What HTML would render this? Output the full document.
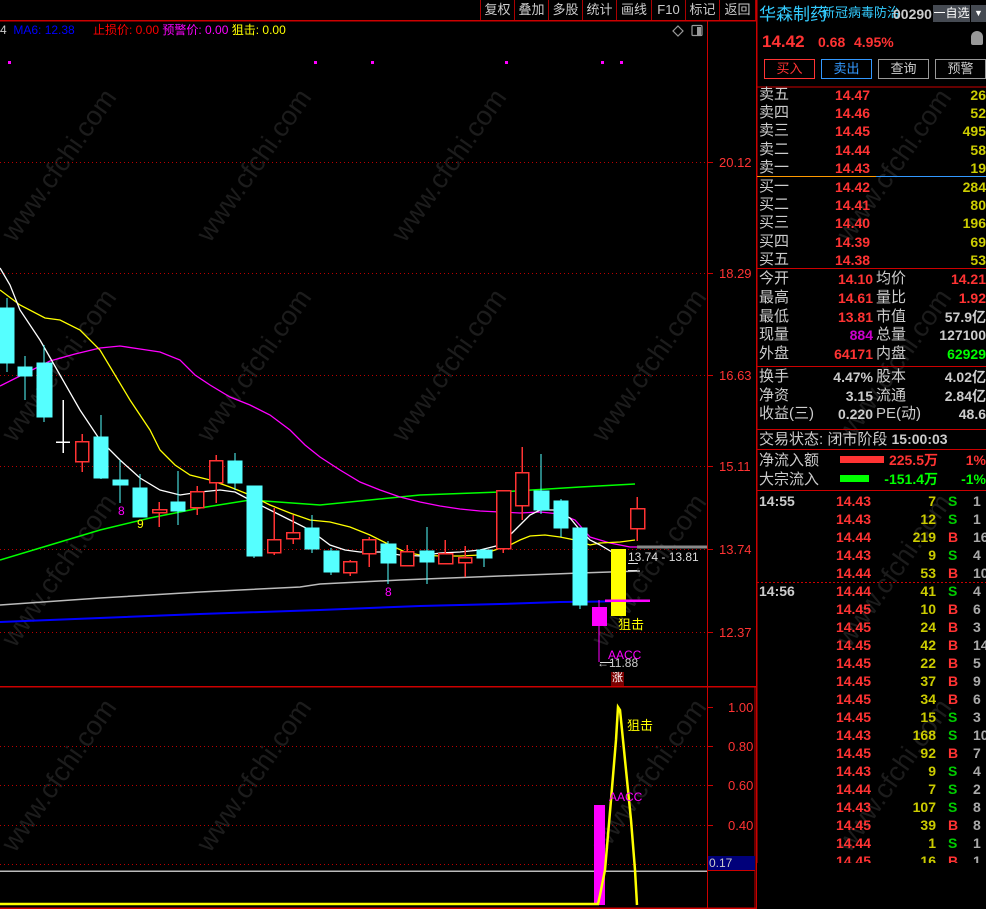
<!DOCTYPE html>
<html><head><meta charset="utf-8">
<style>
*{margin:0;padding:0;box-sizing:border-box}
body{width:986px;height:909px;background:#000;overflow:hidden;position:relative;font-family:"Liberation Sans","Noto Sans CJK SC",sans-serif;}
.a{position:absolute;white-space:nowrap;line-height:1}
.btn{position:absolute;top:0;height:20px;border-right:1px solid #a00;color:#ccc;font-size:13px;text-align:center;line-height:20px}
.r{position:absolute;font-size:14px;line-height:18px;white-space:nowrap}
.wm{position:absolute;color:#1c1c1c;font-size:27px;transform:rotate(-55deg);white-space:nowrap;font-family:"Liberation Sans",sans-serif}
</style></head><body>
<div class="wm" style="left:-30px;top:150px">www.cfchi.com</div>
<div class="wm" style="left:165px;top:150px">www.cfchi.com</div>
<div class="wm" style="left:360px;top:150px">www.cfchi.com</div>
<div class="wm" style="left:-30px;top:350px">www.cfchi.com</div>
<div class="wm" style="left:165px;top:350px">www.cfchi.com</div>
<div class="wm" style="left:360px;top:350px">www.cfchi.com</div>
<div class="wm" style="left:560px;top:350px">www.cfchi.com</div>
<div class="wm" style="left:-30px;top:555px">www.cfchi.com</div>
<div class="wm" style="left:560px;top:555px">www.cfchi.com</div>
<div class="wm" style="left:-30px;top:760px">www.cfchi.com</div>
<div class="wm" style="left:165px;top:760px">www.cfchi.com</div>
<div class="wm" style="left:560px;top:760px">www.cfchi.com</div>
<div class="wm" style="left:805px;top:150px">www.cfchi.com</div>
<div class="wm" style="left:805px;top:350px">www.cfchi.com</div>
<div class="wm" style="left:805px;top:555px">www.cfchi.com</div>
<div class="wm" style="left:805px;top:760px">www.cfchi.com</div>

<svg width="986" height="909" style="position:absolute;left:0;top:0" shape-rendering="crispEdges">
<line x1="0" y1="20.5" x2="757" y2="20.5" stroke="#c00" stroke-width="1.5"/>
<line x1="707.5" y1="20" x2="707.5" y2="909" stroke="#c00"/>
<line x1="756.5" y1="0" x2="756.5" y2="909" stroke="#c00" stroke-width="1.5"/>
<line x1="0" y1="686.5" x2="757" y2="686.5" stroke="#c00" stroke-width="1.5"/>
<line x1="0" y1="908" x2="757" y2="908" stroke="#c00" stroke-width="1.5"/>
<line x1="755" y1="686" x2="755" y2="909" stroke="#c00"/>
<g stroke="#b00" stroke-dasharray="1,3">
<line x1="0" y1="162.5" x2="707" y2="162.5"/><line x1="0" y1="273.5" x2="707" y2="273.5"/>
<line x1="0" y1="375.5" x2="707" y2="375.5"/><line x1="0" y1="466.5" x2="707" y2="466.5"/>
<line x1="0" y1="549.5" x2="707" y2="549.5"/><line x1="0" y1="632.5" x2="707" y2="632.5"/>
<line x1="0" y1="746.5" x2="707" y2="746.5"/><line x1="0" y1="785.5" x2="707" y2="785.5"/>
<line x1="0" y1="825.5" x2="707" y2="825.5"/><line x1="0" y1="864.5" x2="707" y2="864.5"/>
</g>
<g stroke="#c00"><line x1="707" y1="162.5" x2="713" y2="162.5"/><line x1="707" y1="273.5" x2="713" y2="273.5"/><line x1="707" y1="375.5" x2="713" y2="375.5"/><line x1="707" y1="466.5" x2="713" y2="466.5"/><line x1="707" y1="549.5" x2="713" y2="549.5"/><line x1="707" y1="632.5" x2="713" y2="632.5"/>
<line x1="707" y1="707.5" x2="713" y2="707.5"/><line x1="707" y1="746.5" x2="713" y2="746.5"/><line x1="707" y1="785.5" x2="713" y2="785.5"/><line x1="707" y1="825.5" x2="713" y2="825.5"/></g>
<g fill="#ff3333" font-size="13" font-family="Liberation Sans" shape-rendering="auto">
<text x="719" y="167">20.12</text><text x="719" y="278">18.29</text><text x="719" y="380">16.63</text><text x="719" y="471">15.11</text><text x="719" y="554">13.74</text><text x="719" y="637">12.37</text>
<text x="728" y="712">1.00</text><text x="728" y="751">0.80</text><text x="728" y="790">0.60</text><text x="728" y="830">0.40</text>
</g>
<rect x="708" y="856" width="47" height="14" fill="#00007a"/>
<text x="709" y="867" fill="#ccc" font-size="12" font-family="Liberation Sans" shape-rendering="auto">0.17</text>
<line x1="707" y1="870.5" x2="755" y2="870.5" stroke="#c00"/>
<g fill="#f0f"><rect x="8" y="61" width="3" height="3"/><rect x="314" y="61" width="3" height="3"/><rect x="371" y="61" width="3" height="3"/><rect x="505" y="61" width="3" height="3"/><rect x="601" y="61" width="3" height="3"/><rect x="620" y="61" width="3" height="3"/></g>
<g fill="none" stroke-width="1.3" shape-rendering="auto">
<polyline stroke="#00f" stroke-width="2" points="0,622 100,618 200,614 320,610 420,606 500,604 560,602 650,601"/>
<polyline stroke="#bbb" stroke-width="1.5" points="0,605 100,598 200,592 300,587 320,584 400,580 500,576 580,573 640,571"/>
<polyline stroke="#0f0" stroke-width="1.5" points="0,560 50,545 100,530 150,518 200,508 250,500 320,505 420,495 500,492 580,487 635,484"/>
<polyline stroke="#f0f" points="0,386 20,376 50,361 75,354 100,348 120,346 140,349 160,352 180,360 195,375 210,385 230,397 250,405 270,415 290,430 305,445 320,457 340,470 360,482 380,490 400,497 420,502 440,506 460,509 480,511 500,512 520,513 540,512 560,514 575,520 590,537 610,543 630,547 640,547"/>
<polyline stroke="#ff0" points="0,290 20,305 45,318 60,320 80,330 100,350 115,375 130,400 150,430 160,450 175,465 190,475 210,480 230,487 250,495 270,505 290,513 310,520 330,522 350,527 370,535 390,545 405,552 420,555 440,556 460,556 480,555 495,550 510,545 520,540 530,536 545,535 560,537 575,540 590,545 600,543 620,542 635,540"/>
<polyline stroke="#fff" points="0,268 10,285 20,310 40,340 60,375 80,410 100,440 120,460 140,478 160,490 180,495 200,492 220,490 235,492 250,500 270,510 290,520 310,530 330,545 345,550 360,552 380,552 400,555 420,556 440,553 460,552 480,550 500,545 510,535 520,525 530,515 540,510 555,510 570,518 580,530 590,540 600,545 612,552"/>
</g>
<g fill="#55ffff" stroke="#55ffff">
<line x1="7" y1="298" x2="7" y2="372"/><rect x="0" y="308" width="14" height="55"/>
<line x1="25" y1="356" x2="25" y2="400"/><rect x="18" y="367" width="14" height="9"/>
<line x1="44" y1="345" x2="44" y2="422"/><rect x="37" y="363" width="15" height="54"/>
<line x1="101" y1="415" x2="101" y2="479"/><rect x="94" y="437" width="14" height="41"/>
<line x1="120" y1="460" x2="120" y2="503"/><rect x="113" y="480" width="15" height="5"/>
<line x1="140" y1="474" x2="140" y2="517"/><rect x="133" y="488" width="14" height="29"/>
<line x1="178" y1="471" x2="178" y2="525"/><rect x="171" y="502" width="14" height="9"/>
<line x1="235" y1="453" x2="235" y2="490"/><rect x="228" y="461" width="14" height="22"/>
<line x1="254" y1="486" x2="254" y2="558"/><rect x="247" y="486" width="15" height="70"/>
<line x1="312" y1="515" x2="312" y2="553"/><rect x="305" y="528" width="14" height="21"/>
<line x1="331" y1="548" x2="331" y2="575"/><rect x="324" y="551" width="15" height="21"/>
<line x1="388" y1="541" x2="388" y2="584"/><rect x="381" y="544" width="15" height="19"/>
<line x1="427" y1="527" x2="427" y2="584"/><rect x="420" y="551" width="14" height="11"/>
<line x1="484" y1="550" x2="484" y2="567"/><rect x="477" y="550" width="15" height="8"/>
<line x1="541" y1="454" x2="541" y2="514"/><rect x="534" y="491" width="15" height="19"/>
<line x1="561" y1="499" x2="561" y2="537"/><rect x="554" y="501" width="14" height="27"/>
<line x1="580" y1="528" x2="580" y2="609"/><rect x="573" y="528" width="14" height="77"/>
</g>
<g fill="#000" stroke="#ff3333" stroke-width="1.5">
<line x1="82" y1="434" x2="82" y2="472"/><rect x="75.5" y="441.5" width="13" height="20"/>
<line x1="159" y1="502" x2="159" y2="527"/><rect x="152.5" y="509.5" width="14" height="3"/>
<line x1="197" y1="486" x2="197" y2="515"/><rect x="190.5" y="491.5" width="13" height="16"/>
<line x1="216" y1="455" x2="216" y2="503"/><rect x="209.5" y="460.5" width="13" height="22"/>
<line x1="274" y1="508" x2="274" y2="555"/><rect x="267.5" y="539.5" width="13" height="13"/>
<line x1="293" y1="515" x2="293" y2="544"/><rect x="286.5" y="532.5" width="13" height="6"/>
<line x1="350" y1="560" x2="350" y2="576"/><rect x="343.5" y="561.5" width="13" height="11"/>
<line x1="369" y1="537" x2="369" y2="567"/><rect x="362.5" y="539.5" width="13" height="14"/>
<line x1="407" y1="545" x2="407" y2="566"/><rect x="400.5" y="551.5" width="13" height="14"/>
<line x1="445" y1="540" x2="445" y2="564"/><rect x="438.5" y="553.5" width="14" height="10"/>
<line x1="465" y1="546" x2="465" y2="577"/><rect x="458.5" y="557.5" width="13" height="5"/>
<line x1="503" y1="490" x2="503" y2="553"/><rect x="496.5" y="490.5" width="14" height="58"/>
<line x1="522" y1="447" x2="522" y2="520"/><rect x="515.5" y="472.5" width="13" height="33"/>
<line x1="637" y1="497" x2="637" y2="541"/><rect x="630.5" y="508.5" width="14" height="20"/>
</g>
<g stroke="#fff" stroke-width="1.5"><line x1="63" y1="400" x2="63" y2="453"/><line x1="56" y1="442" x2="70" y2="442"/></g>
<line x1="599" y1="600" x2="599" y2="662" stroke="#f0f"/>
<rect x="592" y="607" width="15" height="19" fill="#f0f"/>
<rect x="611" y="549" width="15" height="67" fill="#ff0"/>
<line x1="605" y1="600.5" x2="650" y2="600.5" stroke="#f0f" stroke-width="2.5"/>
<line x1="637" y1="547" x2="707" y2="547" stroke="#888" stroke-width="3"/>
<g stroke="#ddd"><line x1="628" y1="563.5" x2="638" y2="563.5"/><line x1="628" y1="570.5" x2="637" y2="570.5"/><line x1="600" y1="662.5" x2="612" y2="662.5"/></g>
<rect x="611" y="672" width="13" height="14" fill="#7a0000"/>
<line x1="0" y1="871" x2="707" y2="871" stroke="#bbb" stroke-width="1.5"/>
<rect x="594" y="805" width="11" height="100" fill="#f0f"/>
<polyline fill="none" stroke="#ff0" stroke-width="2.5" shape-rendering="auto" points="0,904 598,904 600,895 605,870 611,800 616,740 618,707 620,710 625,760 631,820 635,870 637,905"/>
<g fill="none" stroke="#999" stroke-width="1.2" shape-rendering="auto"><path d="M678 26 L683 31 L678 36 L673 31 Z"/><rect x="692" y="25.5" width="10" height="10" rx="1"/></g>
<rect x="697" y="27" width="4" height="8" fill="#999"/>
<line x1="757" y1="87" x2="986" y2="87" stroke="#c00"/>
<line x1="757" y1="176.5" x2="876" y2="176.5" stroke="#f90"/>
<line x1="876" y1="176.5" x2="986" y2="176.5" stroke="#39f"/>
<line x1="757" y1="268.5" x2="986" y2="268.5" stroke="#c00"/>
<line x1="757" y1="366.5" x2="986" y2="366.5" stroke="#c00"/>
<line x1="757" y1="429.5" x2="986" y2="429.5" stroke="#c00"/>
<line x1="757" y1="449.5" x2="986" y2="449.5" stroke="#c00"/>
<line x1="757" y1="490.5" x2="986" y2="490.5" stroke="#c00"/>
<line x1="757" y1="582.5" x2="986" y2="582.5" stroke="#c00" stroke-dasharray="2,2"/>
<rect x="840" y="456" width="44" height="7" fill="#ff3333"/>
<rect x="840" y="475" width="29" height="7" fill="#0f0"/>
</svg>

<div class="btn" style="left:480px;width:35px;border-left:1px solid #a00">复权</div>
<div class="btn" style="left:515px;width:34px">叠加</div>
<div class="btn" style="left:549px;width:34px">多股</div>
<div class="btn" style="left:583px;width:34px">统计</div>
<div class="btn" style="left:617px;width:35px">画线</div>
<div class="btn" style="left:652px;width:34px">F10</div>
<div class="btn" style="left:686px;width:34px">标记</div>
<div class="btn" style="left:720px;width:36px">返回</div>

<div class="a" style="left:0;top:24px;font-size:12px;color:#00f"><span style="color:#ccc">4</span> &nbsp;MA6: 12.38</div>
<div class="a" style="left:93px;top:24px;font-size:12px;color:#f00">止损价: 0.00 <span style="color:#f0f">预警价: 0.00</span> <span style="color:#ff0">狙击: 0.00</span></div>

<div class="a" style="left:118px;top:505px;font-size:12px;color:#f0f">8</div>
<div class="a" style="left:137px;top:518px;font-size:12px;color:#ff0">9</div>
<div class="a" style="left:385px;top:586px;font-size:12px;color:#f0f">8</div>
<div class="a" style="left:628px;top:551px;font-size:12px;color:#ddd">13.74 - 13.81</div>
<div class="a" style="left:618px;top:618px;font-size:13px;color:#ff0">狙击</div>
<div class="a" style="left:608px;top:649px;font-size:12px;color:#f0f">AACC</div>
<div class="a" style="left:597px;top:657px;font-size:12px;color:#ccc">←11.88</div>
<div class="a" style="left:612px;top:673px;font-size:11px;color:#fff">涨</div>
<div class="a" style="left:627px;top:719px;font-size:13px;color:#ff0">狙击</div>
<div class="a" style="left:609px;top:791px;font-size:12px;color:#f0f">AACC</div>

<div class="a" style="left:759px;top:6px;font-size:17px;color:#3cf">华森制药</div>
<div class="a" style="left:822px;top:6px;font-size:13px;color:#3cf">新冠病毒防治</div>
<div class="a" style="left:893px;top:7px;font-size:14px;color:#ccc;font-weight:bold">00290</div>
<div class="a" style="left:933px;top:5px;width:37px;height:17px;background:#454a52;color:#fff;font-size:12px;line-height:17px;text-align:center">一自选</div>
<div class="a" style="left:971px;top:5px;width:15px;height:17px;background:#454a52;color:#fff;font-size:9px;line-height:17px;text-align:center">▼</div>
<div class="a" style="left:762px;top:33px;font-size:17px;color:#ff3333;font-weight:bold">14.42</div>
<div class="a" style="left:818px;top:35px;font-size:14px;color:#ff3333;font-weight:bold">0.68</div>
<div class="a" style="left:854px;top:35px;font-size:14px;color:#ff3333;font-weight:bold">4.95%</div>
<div class="a" style="left:971px;top:31px;width:12px;height:14px;background:#999;border-radius:6px 6px 2px 2px"></div>
<div class="a" style="left:764px;top:59px;width:51px;height:20px;border:1px solid #f33;color:#f33;font-size:13px;line-height:18px;text-align:center">买入</div>
<div class="a" style="left:821px;top:59px;width:51px;height:20px;border:1px solid #39f;color:#39f;font-size:13px;line-height:18px;text-align:center">卖出</div>
<div class="a" style="left:878px;top:59px;width:51px;height:20px;border:1px solid #999;color:#ccc;font-size:13px;line-height:18px;text-align:center">查询</div>
<div class="a" style="left:935px;top:59px;width:51px;height:20px;border:1px solid #999;color:#ccc;font-size:13px;line-height:18px;text-align:center">预警</div>

<div style="position:absolute;left:757px;top:86px;width:229px;height:823px;overflow:hidden">
<div style="position:relative">
<div class="r" style="left:2px;top:0;color:#ccc;font-size:15px;line-height:18.2px">卖五<br>卖四<br>卖三<br>卖二<br>卖一</div>
<div class="r" style="left:78px;top:0;color:#ff3333;font-weight:bold;line-height:18.2px">14.47<br>14.46<br>14.45<br>14.44<br>14.43</div>
<div class="r" style="right:0;top:0;color:#cc0;font-weight:bold;text-align:right;line-height:18.2px">26<br>52<br>495<br>58<br>19</div>
<div class="r" style="left:2px;top:92px;color:#ccc;font-size:15px;line-height:18.2px">买一<br>买二<br>买三<br>买四<br>买五</div>
<div class="r" style="left:78px;top:92px;color:#ff3333;font-weight:bold;line-height:18.2px">14.42<br>14.41<br>14.40<br>14.39<br>14.38</div>
<div class="r" style="right:0;top:92px;color:#cc0;font-weight:bold;text-align:right;line-height:18.2px">284<br>80<br>196<br>69<br>53</div>
<div class="r" style="left:2px;top:184px;color:#ccc;font-size:15px;line-height:18.8px">今开<br>最高<br>最低<br>现量<br>外盘</div>
<div class="r" style="right:113px;top:184px;color:#ff3333;font-weight:bold;text-align:right;line-height:18.8px">14.10<br>14.61<br>13.81<br><span style="color:#c0c">884</span><br>64171</div>
<div class="r" style="left:119px;top:184px;color:#ccc;font-size:15px;line-height:18.8px">均价<br>量比<br>市值<br>总量<br>内盘</div>
<div class="r" style="right:0;top:184px;color:#ff3333;font-weight:bold;text-align:right;line-height:18.8px">14.21<br>1.92<br><span style="color:#ccc">57.9亿</span><br><span style="color:#ccc">127100</span><br><span style="color:#0f0">62929</span></div>
<div class="r" style="left:2px;top:282px;color:#ccc;font-size:15px;line-height:18.7px">换手<br>净资<br>收益(三)</div>
<div class="r" style="right:113px;top:282px;color:#ccc;font-weight:bold;text-align:right;line-height:18.7px">4.47%<br>3.15<br>0.220</div>
<div class="r" style="left:119px;top:282px;color:#ccc;font-size:15px;line-height:18.7px">股本<br>流通<br>PE(动)</div>
<div class="r" style="right:0;top:282px;color:#ccc;font-weight:bold;text-align:right;line-height:18.7px">4.02亿<br>2.84亿<br>48.6</div>
<div class="r" style="left:2px;top:344px;color:#ccc;font-size:15px">交易状态: 闭市阶段 <b style="font-size:14px">15:00:03</b></div>
<div class="r" style="left:2px;top:365px;color:#ccc;font-size:15px;line-height:19px">净流入额<br>大宗流入</div>
<div class="r" style="right:48px;top:365px;color:#ff3333;font-weight:bold;text-align:right;line-height:19px">225.5万<br><span style="color:#0f0">-151.4万</span></div>
<div class="r" style="right:0;top:365px;color:#ff3333;font-weight:bold;text-align:right;line-height:19px">1%<br><span style="color:#0f0">-1%</span></div>
<div class="r" style="left:2px;top:406px;color:#ccc;font-weight:bold">14:55</div>
<div class="r" style="left:2px;top:496px;color:#ccc;font-weight:bold">14:56</div>
<div class="r" style="right:115px;top:406px;color:#ff3333;font-weight:bold;text-align:right;line-height:18px">14.43<br>14.43<br>14.44<br>14.43<br>14.44<br>14.44<br>14.45<br>14.45<br>14.45<br>14.45<br>14.45<br>14.45<br>14.45<br>14.43<br>14.45<br>14.43<br>14.44<br>14.43<br>14.45<br>14.44<br>14.45</div>
<div class="r" style="right:50px;top:406px;color:#cc0;font-weight:bold;text-align:right;line-height:18px">7<br>12<br>219<br>9<br>53<br>41<br>10<br>24<br>42<br>22<br>37<br>34<br>15<br>168<br>92<br>9<br>7<br>107<br>39<br>1<br>16</div>
<div class="r" style="left:191px;top:406px;font-weight:bold;line-height:18px"><span style="color:#0c0">S</span><br><span style="color:#0c0">S</span><br><span style="color:#f33">B</span><br><span style="color:#0c0">S</span><br><span style="color:#f33">B</span><br><span style="color:#0c0">S</span><br><span style="color:#f33">B</span><br><span style="color:#f33">B</span><br><span style="color:#f33">B</span><br><span style="color:#f33">B</span><br><span style="color:#f33">B</span><br><span style="color:#f33">B</span><br><span style="color:#0c0">S</span><br><span style="color:#0c0">S</span><br><span style="color:#f33">B</span><br><span style="color:#0c0">S</span><br><span style="color:#0c0">S</span><br><span style="color:#0c0">S</span><br><span style="color:#f33">B</span><br><span style="color:#0c0">S</span><br><span style="color:#f33">B</span></div>
<div class="r" style="left:216px;top:406px;color:#aaa;font-weight:bold;line-height:18px">1<br>1<br>16<br>4<br>10<br>4<br>6<br>3<br>14<br>5<br>9<br>6<br>3<br>10<br>7<br>4<br>2<br>8<br>8<br>1<br>1</div>
</div></div>
<div style="position:absolute;left:757px;top:863px;width:229px;height:46px;background:#000"></div>
</body></html>
